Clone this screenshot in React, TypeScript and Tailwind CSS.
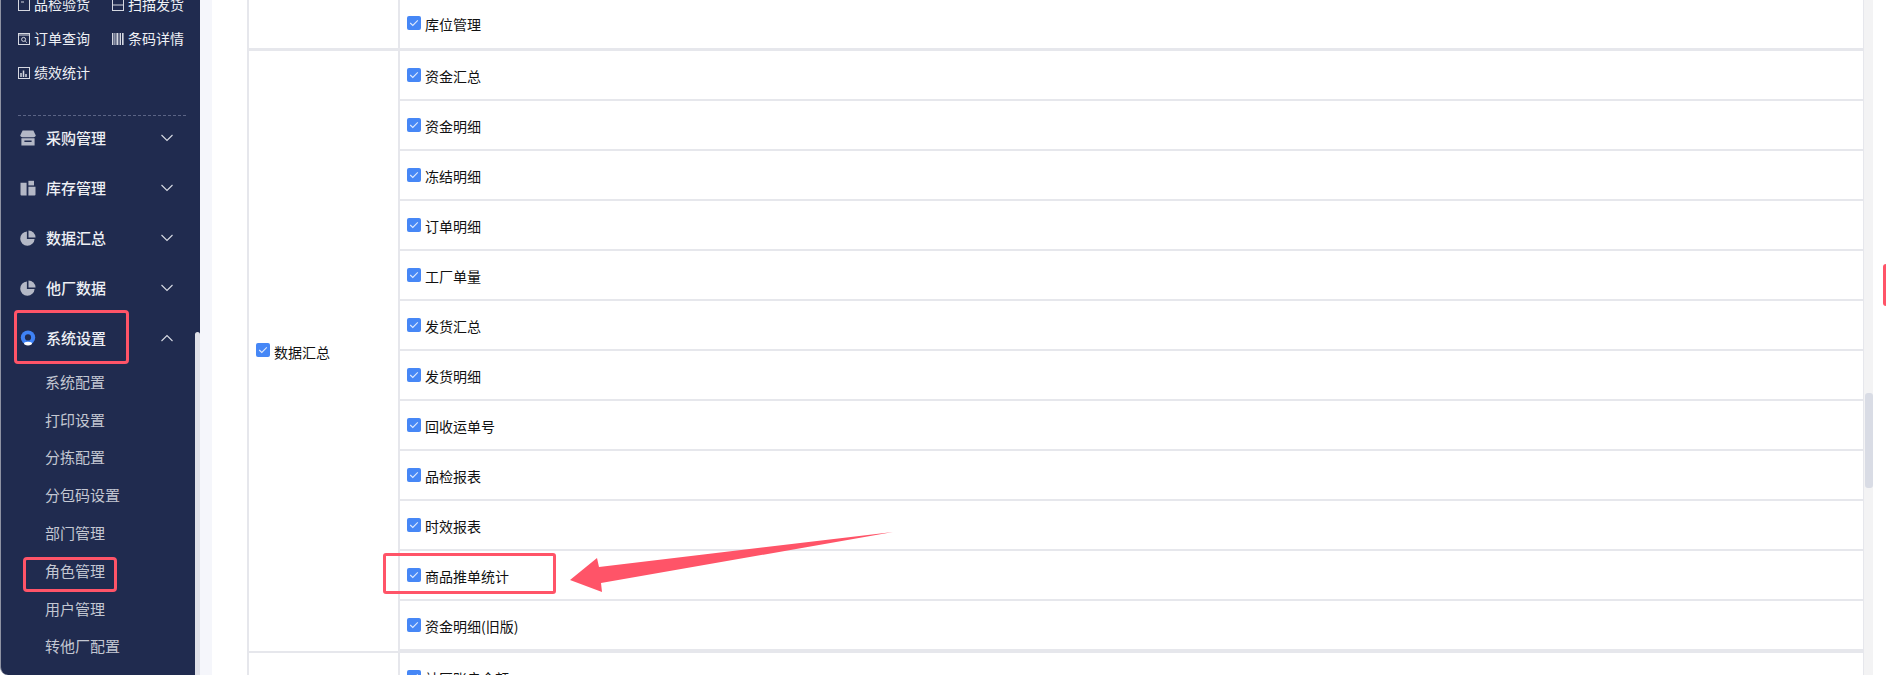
import React from "react";

const FONT = "font-['Noto_Sans_CJK_SC','Liberation_Sans',sans-serif]";

function Check() {
  return (
    <span className="inline-flex h-[14px] w-[14px] shrink-0 items-center justify-center rounded-[2px] bg-[#4687f6]">
      <svg width="10" height="8" viewBox="0 0 10 8" fill="none">
        <path d="M1.2 4 L3.8 6.4 L8.8 1.4" stroke="#dfe9fd" strokeWidth="1.1" />
      </svg>
    </span>
  );
}

function Row({ text }: { text: string }) {
  return (
    <div className="flex h-[50px] items-start border-b-2 border-[#e6e7ec] pl-[7px] pt-[17px]">
      <Check />
      <span className="ml-[4px] mt-[-3px] text-[14px] leading-[22px] text-[#111]">{text}</span>
    </div>
  );
}

function Chevron({ up }: { up?: boolean }) {
  return (
    <svg width="14" height="8" viewBox="0 0 14 8" fill="none" className="ml-auto mr-[26px]">
      <path d={up ? "M1.5 7 L7 1.5 L12.5 7" : "M1.5 1 L7 6.5 L12.5 1"} stroke="#d8dbe4" strokeWidth="1.1" />
    </svg>
  );
}

function MenuIcon({ kind }: { kind: string }) {
  if (kind === "shop")
    return (
      <svg width="16" height="16" viewBox="0 0 16 16" fill="#b4b8c6">
        <path d="M2.6 .5 H13.4 L15.8 5.6 Q15.4 7.2 13.6 7.2 H2.4 Q.6 7.2 .2 5.6 Z" />
        <path fillRule="evenodd" d="M1.4 8.2 H14.6 V15.4 H1.4 Z M4.4 10.4 V12 H11.6 V10.4 Z" />
      </svg>
    );
  if (kind === "box")
    return (
      <svg width="16" height="16" viewBox="0 0 16 16" fill="#b4b8c6">
        <path d="M.5 2.8 H6.6 V15.4 H1.5 Q.5 15.4 .5 14.4 Z" />
        <path d="M8.4 .8 H14 V5.4 H8.4 Z" />
        <path d="M8.4 6.8 H15.5 V14.4 Q15.5 15.4 14.5 15.4 H8.4 Z" />
      </svg>
    );
  if (kind === "pie")
    return (
      <svg width="16" height="16" viewBox="0 0 16 16" fill="#b4b8c6">
        <path d="M6.9 1.4 V9 H14.6 A7.2 7.2 0 1 1 6.9 1.4 Z" />
        <path d="M8.5 .4 A7.4 7.4 0 0 1 15.6 7.4 H8.5 Z" />
      </svg>
    );
  return (
    <svg width="16" height="16" viewBox="0 0 16 16" fill="none">
      <circle cx="8" cy="7.6" r="7.2" fill="#3f82f5" />
      <ellipse cx="8" cy="13.6" rx="4" ry="1.8" fill="#ffffff" />
      <circle cx="8" cy="7.4" r="3.1" fill="#202b4f" />
    </svg>
  );
}

function Menu({ icon, text, up }: { icon: string; text: string; up?: boolean }) {
  return (
    <div className="flex h-[50px] items-center pl-[19px]">
      <span className="flex w-[16px] justify-center"><MenuIcon kind={icon} /></span>
      <span className="ml-[10px] mt-[-1px] text-[15px] font-medium leading-[22px] text-[#eef0f5]">{text}</span>
      <Chevron up={up} />
    </div>
  );
}

function TopIcon({ kind }: { kind: string }) {
  const c = "#d5d8e1";
  if (kind === "bars")
    return (
      <svg width="12" height="12" viewBox="0 0 12 12" fill={c}>
        <rect x="0" y="0" width="1.4" height="12" />
        <rect x="2.4" y="0" width="1" height="12" />
        <rect x="4.4" y="0" width="2" height="12" />
        <rect x="7.6" y="0" width="1.4" height="12" />
        <rect x="10" y="0" width="1.6" height="12" />
      </svg>
    );
  return (
    <svg width="12" height="12" viewBox="0 0 12 12" fill="none" stroke={c} strokeWidth="1">
      <rect x=".5" y=".5" width="11" height="11" />
      {kind === "search" && (
        <>
          <path d="M.5 2 H11.5" />
          <circle cx="5.6" cy="6.4" r="2" />
          <path d="M7.2 8 L8.8 9.6" />
        </>
      )}
      {kind === "chart" && <path d="M3 10 V6 M5.5 10 V3.5 M8 10 V7" strokeWidth="1.5" />}
      {kind === "scan" && <path d="M0 6 H12" />}
      {kind === "check" && <path d="M3 3 H6" />}
    </svg>
  );
}

function TopItem({ icon, text }: { icon: string; text: string }) {
  return (
    <div className="flex h-[34px] w-[94px] items-center">
      <TopIcon kind={icon} />
      <span className="ml-[4px] mt-[-2px] text-[14px] leading-[22px] text-[#eef0f5]">{text}</span>
    </div>
  );
}

const subs = ["系统配置", "打印设置", "分拣配置", "分包码设置", "部门管理", "角色管理", "用户管理", "转他厂配置"];
const rows = ["资金汇总", "资金明细", "冻结明细", "订单明细", "工厂单量", "发货汇总", "发货明细", "回收运单号", "品检报表", "时效报表", "商品推单统计", "资金明细(旧版)"];

export default function App() {
  return (
    <div className={`relative flex h-[675px] w-[1886px] overflow-hidden bg-white ${FONT}`}>
      <aside className="relative h-[675px] w-[200px] shrink-0 overflow-hidden rounded-bl-[8px] border-l border-[#8f93a3] bg-[#202b4f]">
        <div className="ml-[17px] mt-[-12px] flex w-[188px] flex-wrap">
          <TopItem icon="check" text="品检验货" />
          <TopItem icon="scan" text="扫描发货" />
          <TopItem icon="search" text="订单查询" />
          <TopItem icon="bars" text="条码详情" />
          <TopItem icon="chart" text="绩效统计" />
        </div>
        <div className="ml-[17px] mt-[25px] w-[168px] border-t border-dashed border-[#5b6485]" />
        <div className="mt-[-3px]">
          <Menu icon="shop" text="采购管理" />
          <Menu icon="box" text="库存管理" />
          <Menu icon="pie" text="数据汇总" />
          <Menu icon="pie" text="他厂数据" />
          <Menu icon="ring" text="系统设置" up />
        </div>
        <div className="pl-[44px]">
          {subs.map((s) => (
            <div key={s} className="flex h-[37.8px] items-center text-[15px] leading-[22px] text-[#c3c7d2]">{s}</div>
          ))}
        </div>
        <div className="absolute right-0 top-[332px] h-[343px] w-[5px] rounded-t-[3px] bg-[#dfe0e8]" />
      </aside>

      <div className="h-full w-[12px] shrink-0 bg-[#f5f6fb]" />

      <main className="flex h-full min-w-0 flex-1">
        <div className="ml-[35px] h-full w-[1616px] border-l-2 border-[#e6e7ec]">
          <div className="flex h-[51px] border-b-[3px] border-[#e6e7ec]">
            <div className="w-[151px] shrink-0 border-r-2 border-[#e6e7ec]" />
            <div className="flex items-start pl-[7px] pt-[16px]">
              <Check />
              <span className="ml-[4px] mt-[-3px] text-[14px] leading-[22px] text-[#111]">库位管理</span>
            </div>
          </div>
          <div className="flex h-[602px] border-b-[2px] border-[#e6e7ec]">
            <div className="flex w-[151px] shrink-0 items-start border-r-2 border-[#e6e7ec] pl-[7px] pt-[292px]">
              <Check />
              <span className="ml-[4px] mt-[-2px] text-[14px] leading-[22px] text-[#111]">数据汇总</span>
            </div>
            <div className="min-w-0 flex-1">
              {rows.map((r) => (
                <Row key={r} text={r} />
              ))}
            </div>
          </div>
          <div className="flex h-[40px]">
            <div className="w-[151px] shrink-0 border-r-2 border-[#e6e7ec]" />
            <div className="flex items-start pl-[7px] pt-[17px]">
              <Check />
              <span className="ml-[4px] mt-[-3px] text-[14px] leading-[22px] text-[#111]">社区账户余额</span>
            </div>
          </div>
        </div>
        <div className="relative h-full w-[10px] shrink-0 border-l border-[#e6e7ec] bg-[#f3f3f4]">
          <div className="absolute left-[1px] top-[393px] h-[95px] w-[8px] rounded-[3px] bg-[#d9dce5]" />
        </div>
        <div className="flex-1" />
      </main>

      <div className="absolute left-[14px] top-[310px] h-[54px] w-[115px] rounded-[4px] border-[3px] border-[#ff5468]" />
      <div className="absolute left-[23px] top-[557px] h-[35px] w-[94px] rounded-[4px] border-[3px] border-[#ff5468]" />
      <div className="absolute left-[383px] top-[553px] h-[41px] w-[173px] rounded-[3px] border-[3px] border-[#ff5468]" />
      <div className="absolute left-[1883px] top-[264px] h-[42px] w-[3px] rounded-l-[3px] bg-[#ff5468]" />
      <svg className="absolute left-0 top-0" width="1886" height="675" fill="#ff5468">
        <polygon points="570,580 597,558 599,567 893,532 601,583 602,592" />
      </svg>
    </div>
  );
}
